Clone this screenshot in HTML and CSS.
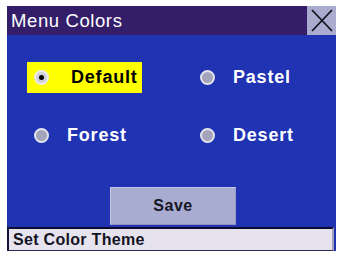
FILE: index.html
```html
<!DOCTYPE html>
<html>
<head>
<meta charset="utf-8">
<link rel="stylesheet" href="styles.css">
</head>
<body>
<div class="frame">
  <div class="titlebar">
    <div class="title">Menu Colors</div>
    <div class="close">
      <svg width="29" height="29" viewBox="0 0 29 29"><path d="M5 4 L25 25 M25 4 L5 25" stroke="#141420" stroke-width="1.8" fill="none"/></svg>
    </div>
  </div>
  <div class="main">
    <div class="options">
      <div class="opt selected"><span class="radio"><span class="dot"></span></span><span class="label">Default</span></div>
      <div class="opt"><span class="radio"></span><span class="label">Pastel</span></div>
      <div class="opt"><span class="radio"></span><span class="label">Forest</span></div>
      <div class="opt"><span class="radio"></span><span class="label">Desert</span></div>
    </div>
    <div class="save">Save</div>
  </div>
  <div class="status">Set Color Theme</div>
</div>
</body>
</html>
```
FILE: styles.css
```css
html, body { margin: 0; padding: 0; background: #ffffff; }
body { font-family: "Liberation Sans", Arial, sans-serif; }
.frame {
  margin: 6px 0 0 7px;
  width: 329px;
  height: 245px;
  display: flex;
  flex-direction: column;
  background: #1f33b3;
}
.titlebar {
  height: 29px;
  background: #341e6a;
  display: flex;
  align-items: center;
  justify-content: space-between;
}
.title {
  color: #ffffff;
  font-size: 18.5px;
  letter-spacing: 0.6px;
  padding-left: 4px;
}
.close {
  width: 29px;
  height: 29px;
  background: #a9abcf;
}
.close svg { display: block; }
.main {
  flex: 1;
  display: flex;
  flex-direction: column;
  align-items: stretch;
  padding: 27px 0 2px 20px;
}
.options {
  display: grid;
  grid-template-columns: 166px 130px;
  row-gap: 27px;
}
.opt {
  height: 31px;
  display: flex;
  align-items: center;
  padding-left: 7px;
  color: #ffffff;
  font-weight: bold;
  font-size: 18px;
  letter-spacing: 0.8px;
}
.opt.selected {
  background: #ffff00;
  color: #000000;
  width: 115px;
  box-sizing: border-box;
}
.opt.selected .label { margin-left: 22px; }
.radio {
  width: 11px;
  height: 11px;
  border-radius: 50%;
  border: 2px solid #e4e4ec;
  background: #a4a4ba;
  display: flex;
  align-items: center;
  justify-content: center;
  flex: none;
}
.opt.selected .radio { background: #cfcfd6; border-color: #ececf0; }
.dot { width: 5px; height: 5px; border-radius: 50%; background: #000000; }
.label { margin-left: 18px; }
.save {
  margin-top: auto;
  align-self: flex-start;
  margin-left: 83px;
  width: 126px;
  height: 38px;
  box-sizing: border-box;
  background: #a8acd0;
  border: 1px solid #c4c8e6;
  border-bottom-color: #8e92bc;
  border-right-color: #9a9ec6;
  display: flex;
  align-items: center;
  justify-content: center;
  color: #161626;
  font-weight: bold;
  font-size: 16px;
  letter-spacing: 0.5px;
}
.status {
  height: 24px;
  box-sizing: border-box;
  margin-right: 2px;
  background: #e6e3ee;
  border-top: 2px solid #0c0c30;
  border-left: 2px solid #14143c;
  border-bottom: 1px solid #2a2a50;
  border-right: 2px solid #a0a0b6;
  color: #141424;
  font-weight: bold;
  font-size: 16px;
  letter-spacing: 0.3px;
  padding-left: 4px;
  display: flex;
  align-items: center;
}
```
